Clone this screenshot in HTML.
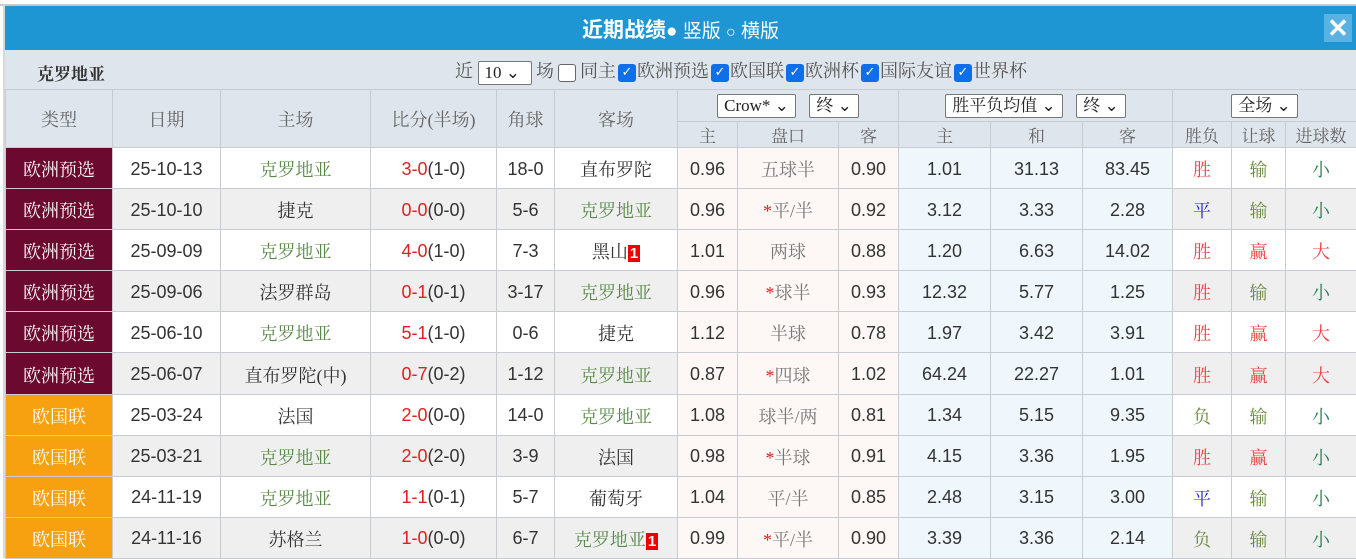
<!DOCTYPE html>
<html><head><meta charset="utf-8"><style>
*{margin:0;padding:0;box-sizing:border-box}
body{width:1356px;height:558px;overflow:hidden;background:#fff;font-family:"Liberation Sans","Noto Sans CJK SC",sans-serif;position:relative}
.topline{position:absolute;left:0;top:4px;width:1356px;height:2px;background:#c8c8c8}
.lline{position:absolute;left:3px;top:5px;width:2px;height:553px;background:#d8d8d8}
.title{position:absolute;left:5px;top:6px;width:1351px;height:44px;background:#1e96d4;color:#fff;text-align:center;line-height:46px;font-size:19px}
.title b{font-size:21px;font-family:"Noto Sans CJK SC",sans-serif}
.x{position:absolute;right:4px;top:8px;width:28px;height:28px;background:#5ab2e3;color:#fff;font-size:26px;line-height:28px;text-align:center;font-weight:bold}
.filter{position:absolute;left:5px;top:50px;width:1351px;height:39px;background:#dfe5ec;font-family:"Liberation Serif","Noto Serif CJK SC",serif;font-size:18px;color:#555}
.filter .team{position:absolute;left:32px;top:10px;font-weight:bold;color:#333;font-size:17px}
.filter .opts{position:absolute;left:450px;top:9px;white-space:nowrap;line-height:24px}
.sel{display:inline-block;border:1px solid #777;background:#fff;border-radius:2px;padding:0 6px;height:24px;line-height:22px;font-size:17px;color:#222;vertical-align:middle}
.cb{display:inline-block;width:18px;height:18px;margin:0 1px 0 2px;border-radius:3px;background:#0f6fe8;color:#fff;font-size:13px;line-height:18px;text-align:center;vertical-align:middle;font-family:"DejaVu Sans",sans-serif}
.cbe{display:inline-block;width:18px;height:18px;margin:0 4px 0 4px;border-radius:3px;border:1px solid #666;background:#fff;vertical-align:middle}
table{position:absolute;left:5px;top:89px;border-collapse:collapse;table-layout:fixed;width:1351px;font-family:"Liberation Serif","Noto Serif CJK SC",serif}
td,th{border:1px solid #c8ccd2;text-align:center;font-weight:normal;font-size:18px;color:#333;white-space:nowrap;overflow:hidden}
th{background:#dfe5ec;color:#666}
tr.h1 th{height:32px}tr.h2 th{height:26px;font-size:17px}
tr.d td{height:41.1px;font-family:"Liberation Sans Narrow","Liberation Sans","Noto Serif CJK SC",sans-serif;padding-top:2px}
tr.d td.cn{font-family:"Liberation Serif","Noto Serif CJK SC",serif}
tr.g td{background:#efefef}
td.ty{color:#fff;font-family:"Liberation Serif","Noto Serif CJK SC",serif!important}
tr.d td.a{background:#fdf8f5}
tr.d td.b{background:#eff7fc}
.eu{background:#6b0a2e!important}.ng{background:#f7a010!important}
.gr{color:#5a8a4a}.r{color:#e02020}.red{color:#f04040}.blu{color:#2020e0}.grn{color:#208050}.ol{color:#6a8a3a}
.tag{background:#e00;color:#fff;font-weight:bold;font-size:15px;padding:0 2px;font-family:"Liberation Sans",sans-serif}
</style></head><body>
<div class="topline"></div><div class="lline"></div>
<div class="title"><b>近期战绩</b>● 竖版 <span style="font-size:16px">○</span> 横版<div class="x">✕</div></div>
<div class="filter"><span class="team">克罗地亚</span>
<span class="opts">近 <span class="sel" style="width:54px">10 ⌄</span> 场<span class="cbe"></span>同主<span class="cb">✓</span>欧洲预选<span class="cb">✓</span>欧国联<span class="cb">✓</span>欧洲杯<span class="cb">✓</span>国际友谊<span class="cb">✓</span>世界杯</span></div>
<table>
<colgroup><col style="width:107px"><col style="width:108px"><col style="width:150px"><col style="width:126px"><col style="width:58px"><col style="width:123px"><col style="width:60px"><col style="width:101px"><col style="width:60px"><col style="width:92px"><col style="width:92px"><col style="width:90px"><col style="width:59px"><col style="width:54px"><col style="width:71px"></colgroup>
<tr class="h1"><th rowspan="2">类型</th><th rowspan="2">日期</th><th rowspan="2">主场</th><th rowspan="2">比分(半场)</th><th rowspan="2">角球</th><th rowspan="2">客场</th>
<th colspan="3"><span class="sel">Crow* ⌄</span>&nbsp;&nbsp;&nbsp;<span class="sel">终 ⌄</span></th>
<th colspan="3"><span class="sel">胜平负均值 ⌄</span>&nbsp;&nbsp;&nbsp;<span class="sel">终 ⌄</span></th>
<th colspan="3"><span class="sel">全场 ⌄</span></th></tr>
<tr class="h2"><th>主</th><th>盘口</th><th>客</th><th>主</th><th>和</th><th>客</th><th>胜负</th><th>让球</th><th>进球数</th></tr>

<tr class="d"><td class="ty eu">欧洲预选</td><td>25-10-13</td><td class="cn gr">克罗地亚</td><td><span class="r">3-0</span>(1-0)</td><td>18-0</td><td class="cn">直布罗陀</td><td class="a">0.96</td><td class="a cn" style="color:#777">五球半</td><td class="a">0.90</td><td class="b">1.01</td><td class="b">31.13</td><td class="b">83.45</td><td class="cn red">胜</td><td class="cn ol">输</td><td class="cn grn">小</td></tr>
<tr class="d g"><td class="ty eu">欧洲预选</td><td>25-10-10</td><td class="cn">捷克</td><td><span class="r">0-0</span>(0-0)</td><td>5-6</td><td class="cn gr">克罗地亚</td><td class="a">0.96</td><td class="a cn" style="color:#777"><span class="r">*</span>平/半</td><td class="a">0.92</td><td class="b">3.12</td><td class="b">3.33</td><td class="b">2.28</td><td class="cn blu">平</td><td class="cn ol">输</td><td class="cn grn">小</td></tr>
<tr class="d"><td class="ty eu">欧洲预选</td><td>25-09-09</td><td class="cn gr">克罗地亚</td><td><span class="r">4-0</span>(1-0)</td><td>7-3</td><td class="cn">黑山<span class="tag">1</span></td><td class="a">1.01</td><td class="a cn" style="color:#777">两球</td><td class="a">0.88</td><td class="b">1.20</td><td class="b">6.63</td><td class="b">14.02</td><td class="cn red">胜</td><td class="cn red">赢</td><td class="cn red">大</td></tr>
<tr class="d g"><td class="ty eu">欧洲预选</td><td>25-09-06</td><td class="cn">法罗群岛</td><td><span class="r">0-1</span>(0-1)</td><td>3-17</td><td class="cn gr">克罗地亚</td><td class="a">0.96</td><td class="a cn" style="color:#777"><span class="r">*</span>球半</td><td class="a">0.93</td><td class="b">12.32</td><td class="b">5.77</td><td class="b">1.25</td><td class="cn red">胜</td><td class="cn ol">输</td><td class="cn grn">小</td></tr>
<tr class="d"><td class="ty eu">欧洲预选</td><td>25-06-10</td><td class="cn gr">克罗地亚</td><td><span class="r">5-1</span>(1-0)</td><td>0-6</td><td class="cn">捷克</td><td class="a">1.12</td><td class="a cn" style="color:#777">半球</td><td class="a">0.78</td><td class="b">1.97</td><td class="b">3.42</td><td class="b">3.91</td><td class="cn red">胜</td><td class="cn red">赢</td><td class="cn red">大</td></tr>
<tr class="d g"><td class="ty eu">欧洲预选</td><td>25-06-07</td><td class="cn">直布罗陀(中)</td><td><span class="r">0-7</span>(0-2)</td><td>1-12</td><td class="cn gr">克罗地亚</td><td class="a">0.87</td><td class="a cn" style="color:#777"><span class="r">*</span>四球</td><td class="a">1.02</td><td class="b">64.24</td><td class="b">22.27</td><td class="b">1.01</td><td class="cn red">胜</td><td class="cn red">赢</td><td class="cn red">大</td></tr>
<tr class="d"><td class="ty ng">欧国联</td><td>25-03-24</td><td class="cn">法国</td><td><span class="r">2-0</span>(0-0)</td><td>14-0</td><td class="cn gr">克罗地亚</td><td class="a">1.08</td><td class="a cn" style="color:#777">球半/两</td><td class="a">0.81</td><td class="b">1.34</td><td class="b">5.15</td><td class="b">9.35</td><td class="cn ol">负</td><td class="cn ol">输</td><td class="cn grn">小</td></tr>
<tr class="d g"><td class="ty ng">欧国联</td><td>25-03-21</td><td class="cn gr">克罗地亚</td><td><span class="r">2-0</span>(2-0)</td><td>3-9</td><td class="cn">法国</td><td class="a">0.98</td><td class="a cn" style="color:#777"><span class="r">*</span>半球</td><td class="a">0.91</td><td class="b">4.15</td><td class="b">3.36</td><td class="b">1.95</td><td class="cn red">胜</td><td class="cn red">赢</td><td class="cn grn">小</td></tr>
<tr class="d"><td class="ty ng">欧国联</td><td>24-11-19</td><td class="cn gr">克罗地亚</td><td><span class="r">1-1</span>(0-1)</td><td>5-7</td><td class="cn">葡萄牙</td><td class="a">1.04</td><td class="a cn" style="color:#777">平/半</td><td class="a">0.85</td><td class="b">2.48</td><td class="b">3.15</td><td class="b">3.00</td><td class="cn blu">平</td><td class="cn ol">输</td><td class="cn grn">小</td></tr>
<tr class="d g"><td class="ty ng">欧国联</td><td>24-11-16</td><td class="cn">苏格兰</td><td><span class="r">1-0</span>(0-0)</td><td>6-7</td><td class="cn gr">克罗地亚<span class="tag">1</span></td><td class="a">0.99</td><td class="a cn" style="color:#777"><span class="r">*</span>平/半</td><td class="a">0.90</td><td class="b">3.39</td><td class="b">3.36</td><td class="b">2.14</td><td class="cn ol">负</td><td class="cn ol">输</td><td class="cn grn">小</td></tr>
</table>
</body></html>
